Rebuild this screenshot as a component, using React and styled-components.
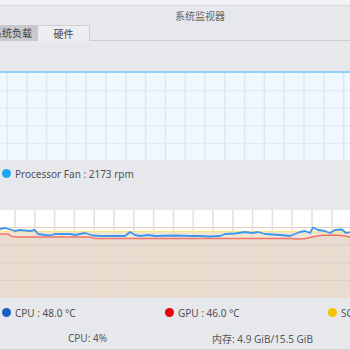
import React from 'react';
import styled, { createGlobalStyle } from 'styled-components';

const GlobalStyle = createGlobalStyle`
  html, body {
    margin: 0;
    padding: 0;
    background: #e7e8ec;
  }
  body {
    font-family: "Noto Sans", "Noto Sans CJK SC", sans-serif;
    font-size: 10px;
    color: #4d4f52;
  }
`;

const Window = styled.div`
  width: 350px;
  height: 350px;
  overflow: hidden;
  display: flex;
  flex-direction: column;
  background: #e7e8ec;
`;

const TopStrip = styled.div`
  height: 5px;
  background: #f3f3f5;
  border-bottom: 1px solid #d9d9dd;
`;

const Header = styled.div`
  height: 34px;
  display: flex;
  flex-direction: column;
  border-bottom: 1px solid #cdced2;
`;

const Title = styled.div`
  height: 19px;
  padding-left: 175px;
  line-height: 20px;
  color: #66686b;
`;

const Tabs = styled.div`
  display: flex;
  height: 16px;
  margin-top: auto;
  margin-bottom: -1px;
`;

const Tab = styled.div`
  box-sizing: border-box;
  width: ${p => p.w}px;
  height: 16px;
  display: flex;
  align-items: center;
  justify-content: ${p => (p.active ? 'center' : 'flex-end')};
  padding-right: ${p => (p.active ? 0 : 6)}px;
  overflow: hidden;
  background: ${p => (p.active ? '#eeeef0' : '#c9c9cd')};
  border-top: ${p => (p.active ? '1px solid #cfd0d4' : 'none')};
  border-right: ${p => (p.active ? '1px solid #cfd0d4' : 'none')};
  color: #3d3f42;
`;

const TabLabel = styled.span`
  position: relative;
  white-space: nowrap;
  flex-shrink: 0;
  &::after {
    content: '';
    display: ${p => (p.active ? 'block' : 'none')};
    position: absolute;
    left: 0;
    right: 0;
    bottom: -2px;
    height: 1px;
    background: #3daee9;
  }
`;

const Spacer = styled.div`
  height: ${p => p.h}px;
  flex-shrink: 0;
`;

const ChartBox = styled.div`
  height: ${p => p.h}px;
  flex-shrink: 0;
  background: ${p => p.bg};
  border-top: ${p => (p.topLine ? `2px solid ${p.topLine}` : 'none')};
  box-sizing: border-box;
  svg {
    display: block;
  }
`;

const LegendRow = styled.div`
  display: flex;
  height: ${p => p.h}px;
  align-items: center;
  padding-left: 2px;
`;

const LegendItem = styled.div`
  width: ${p => p.w || 163}px;
  flex-shrink: 0;
  display: flex;
  align-items: center;
  gap: 4px;
  white-space: nowrap;
  color: #4f5154;
`;

const Dot = styled.span`
  width: 9px;
  height: 9px;
  border-radius: 50%;
  background: ${p => p.color};
  flex-shrink: 0;
`;

const StatusBar = styled.div`
  display: flex;
  height: 22px;
  align-items: center;
  border-bottom: 1px solid #d3d4d8;
`;

const StatusCell = styled.div`
  flex: 1;
  text-align: center;
  color: #55575a;
`;

const BottomStrip = styled.div`
  flex: 1;
  background: #f2f2f4;
`;

const range = (start, step, end) => {
  const out = [];
  for (let v = start; v <= end; v += step) out.push(v);
  return out;
};

const blue = [
  [0, 230], [5, 229], [15, 232], [20, 231], [30, 232], [35, 231], [38, 235], [45, 236],
  [50, 236.5], [55, 235], [70, 235], [75, 236], [85, 234], [93, 236.5], [100, 237],
  [125, 237], [130, 233], [135, 236], [140, 237], [148, 236], [155, 237], [175, 236.5],
  [190, 237], [200, 237], [210, 237.5], [220, 237], [225, 235], [235, 234.5], [245, 233],
  [252, 234], [258, 233], [265, 235], [280, 236], [290, 237], [295, 235], [300, 233],
  [305, 232], [310, 234], [313, 228.5], [318, 231], [325, 232], [330, 234], [335, 231],
  [342, 230.5], [346, 234], [350, 233],
];

const red = [
  [0, 235], [8, 235], [12, 237.5], [20, 238], [90, 238], [95, 239.5], [290, 239.5],
  [300, 240], [306, 239.5], [312, 238], [320, 236.5], [335, 236], [345, 237], [350, 238],
];

const yellow = [[0, 232.5], [300, 232.5], [320, 233], [350, 233]];

const Chart1 = () => (
  <svg width="350" height="87">
    {range(17.6, 17.6, 80).map(y => (
      <line key={y} x1="0" x2="350" y1={y} y2={y} stroke="#dde9f2" strokeWidth="1" />
    ))}
    {range(7, 19.8, 350).map(x => (
      <line key={x} x1={x} x2={x} y1="0" y2="87" stroke="#dce8f1" strokeWidth="1.5" />
    ))}
  </svg>
);

const Chart2 = () => {
  const top = 211;
  const pts = arr => arr.map(([x, y]) => `${x},${y - top}`).join(' ');
  const area = arr => `0,88 ${pts(arr)} 350,88`;
  return (
    <svg width="350" height="88">
      <polygon points={area(yellow)} fill="#efe6d6" />
      <polygon points={area(red)} fill="#eadbcf" />
      {range(17.6, 17.6, 80).map(y => (
        <line key={y} x1="0" x2="350" y1={y} y2={y} stroke="#ddccbf" strokeWidth="1" />
      ))}
      {range(15, 19.8, 350).map(x => (
        <line key={x} x1={x} x2={x} y1="0" y2="88" stroke="#e6ddd6" strokeWidth="1.5" opacity="0.9" />
      ))}
      <polyline points={pts(yellow)} fill="none" stroke="#fbe58a" strokeWidth="1.6" />
      <polyline points={pts(red)} fill="none" stroke="#f4746c" strokeWidth="1.6" />
      <polyline points={pts(blue)} fill="none" stroke="#3d97f0" strokeWidth="1.8" strokeLinejoin="round" />
    </svg>
  );
};

export default function App() {
  return (
    <>
      <GlobalStyle />
      <Window>
        <TopStrip />
        <Header>
          <Title>系统监视器</Title>
          <Tabs>
            <Tab w={38}>
              <TabLabel>系统负载</TabLabel>
            </Tab>
            <Tab w={52} active>
              <TabLabel active>硬件</TabLabel>
            </Tab>
          </Tabs>
        </Header>
        <Spacer h={30} />
        <ChartBox h={89} bg="#eef8fe" topLine="#8fd1f6">
          <Chart1 />
        </ChartBox>
        <LegendRow h={28}>
          <LegendItem w={200}>
            <Dot color="#1aa6f3" />
            Processor Fan : 2173 rpm
          </LegendItem>
        </LegendRow>
        <Spacer h={23} />
        <ChartBox h={88} bg="#ffffff">
          <Chart2 />
        </ChartBox>
        <LegendRow h={30}>
          <LegendItem>
            <Dot color="#1a5fc0" />
            CPU : 48.0 °C
          </LegendItem>
          <LegendItem>
            <Dot color="#e8000b" />
            GPU : 46.0 °C
          </LegendItem>
          <LegendItem>
            <Dot color="#f5c400" />
            SOC
          </LegendItem>
        </LegendRow>
        <StatusBar>
          <StatusCell>CPU: 4%</StatusCell>
          <StatusCell>内存: 4.9 GiB/15.5 GiB</StatusCell>
        </StatusBar>
        <BottomStrip />
      </Window>
    </>
  );
}
